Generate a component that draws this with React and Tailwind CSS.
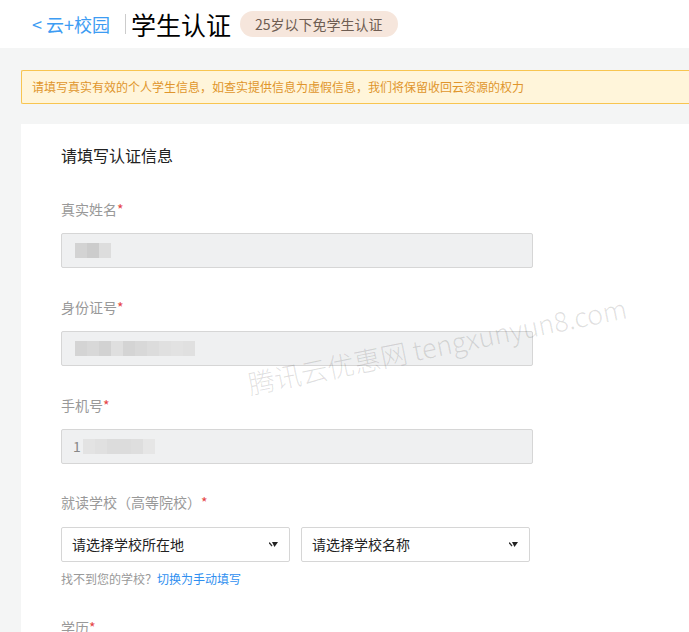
import React from "react";

const font = { fontFamily: '"Microsoft YaHei", "Noto Sans CJK SC", "Noto Sans", sans-serif' };

function Label({ children }) {
  return (
    <div className="text-[14px] leading-[20px] text-[#999]">
      {children}
      <span className="text-[#e54545]">*</span>
    </div>
  );
}

function Blur({ blocks }) {
  return (
    <div className="flex h-[15px]">
      {blocks.map((c, i) => (
        <div key={i} className="h-full w-[12px]" style={{ background: c }} />
      ))}
    </div>
  );
}

function Arrow() {
  return (
    <svg width="9" height="7" viewBox="0 0 9 7" className="shrink-0">
      <path d="M0 1.5 L3 5" stroke="#333" strokeWidth="1.3" fill="none" />
      <path d="M3 1 L9 1 L5.5 6 Z" fill="#222" />
    </svg>
  );
}

export default function App() {
  return (
    <div className="relative w-[689px] h-[632px] overflow-hidden bg-[#f4f5f5]" style={font}>
      {/* header */}
      <div className="h-[48px] bg-white flex items-center pl-[32px]">
        <span className="text-[18px] text-[#3d9cf3]">&lt;&nbsp;云+校园</span>
        <div className="w-px h-[20px] bg-[#ccc] ml-[15px] mr-[5px]" />
        <span className="text-[25px] text-black leading-none">学生认证</span>
        <span className="ml-[9px] h-[26px] px-[15px] rounded-full bg-[#f6e6dc] text-[#6e5d52] text-[14px] flex items-center">
          25岁以下免学生认证
        </span>
      </div>

      {/* alert */}
      <div className="ml-[21px] mt-[22px] h-[34px] border border-[#f8c550] border-r-0 bg-[#fff5da] rounded-l-[2px] flex items-center pl-[10px] text-[12px] text-[#e0952c]">
        请填写真实有效的个人学生信息，如查实提供信息为虚假信息，我们将保留收回云资源的权力
      </div>

      {/* card */}
      <div className="ml-[21px] mt-[20px] bg-white h-[600px] pl-[40px] pt-[20px]">
        <div className="text-[16px] text-[#222] leading-[22px]">请填写认证信息</div>

        <div className="mt-[33px]">
          <Label>真实姓名</Label>
          <div className="mt-[14px] w-[472px] h-[35px] bg-[#eff0f1] border border-[#d6d6d6] rounded-[2px] flex items-center pl-[13px]">
            <Blur blocks={["#d3d3d3", "#cccccc", "#dddddd"]} />
          </div>
        </div>

        <div className="mt-[29px]">
          <Label>身份证号</Label>
          <div className="mt-[14px] w-[472px] h-[35px] bg-[#eff0f1] border border-[#d6d6d6] rounded-[2px] flex items-center pl-[13px]">
            <Blur
              blocks={[
                "#d4d4d4",
                "#d8d8d8",
                "#d2d2d2",
                "#dfdfdf",
                "#d4d4d4",
                "#d8d8d8",
                "#dcdcdc",
                "#e0e0e0",
                "#e2e2e2",
                "#e0e0e0",
              ]}
            />
          </div>
        </div>

        <div className="mt-[29px]">
          <Label>手机号</Label>
          <div className="mt-[14px] w-[472px] h-[35px] bg-[#eff0f1] border border-[#d6d6d6] rounded-[2px] flex items-center pl-[11px]">
            <span className="text-[14px] text-[#888]">1</span>
            <div className="ml-[2px]">
              <Blur blocks={["#e3e3e3", "#e0e0e0", "#dcdcdc", "#dcdcdc", "#dedede", "#e6e6e6"]} />
            </div>
          </div>
        </div>

        <div className="mt-[28px]">
          <Label>就读学校（高等院校）</Label>
          <div className="mt-[15px] flex gap-[11px]">
            <div className="w-[229px] h-[35px] border border-[#d6d6d6] rounded-[2px] flex items-center justify-between pl-[10px] pr-[11px]">
              <span className="text-[14px] text-[#222]">请选择学校所在地</span>
              <Arrow />
            </div>
            <div className="w-[229px] h-[35px] border border-[#d6d6d6] rounded-[2px] flex items-center justify-between pl-[10px] pr-[11px]">
              <span className="text-[14px] text-[#222]">请选择学校名称</span>
              <Arrow />
            </div>
          </div>
          <div className="mt-[8px] text-[12px] text-[#999]">
            找不到您的学校？<span className="text-[#2f8ff0]">切换为手动填写</span>
          </div>
        </div>

        <div className="mt-[29px]">
          <Label>学历</Label>
        </div>
      </div>

      {/* watermark */}
      <div
        className="absolute left-[248px] top-[364px] text-[27px] text-[#000]/[0.12] whitespace-nowrap origin-left"
        style={{ transform: "rotate(-11.5deg)", fontFamily: '"Noto Sans CJK SC", "Noto Sans", sans-serif', fontWeight: 300 }}
      >
        腾讯云优惠网&nbsp;tengxunyun8.com
      </div>
    </div>
  );
}
